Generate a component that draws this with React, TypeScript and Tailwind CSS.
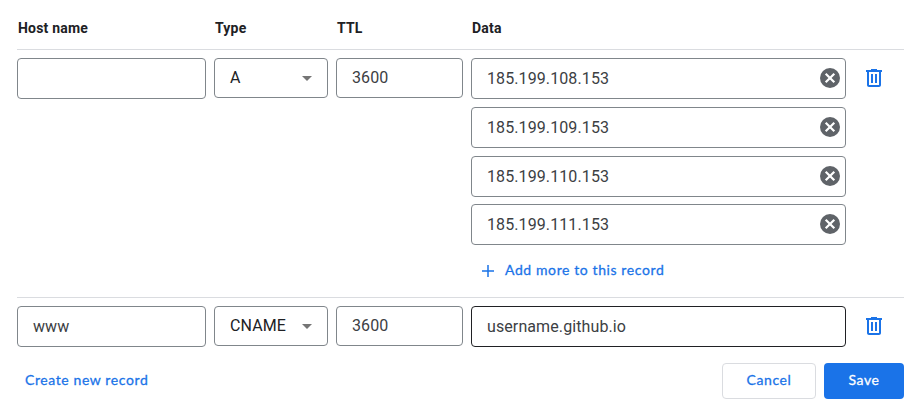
const fieldBorder = 'rounded border border-[#80868b]';
const actionText =
  "font-['Lato',sans-serif] text-[14px] leading-5 font-normal tracking-[0.6px] [-webkit-text-stroke:0.28px_currentColor]";

function TrashIcon() {
  return (
    <svg className="size-6 fill-[#1a73e8]" viewBox="0 0 24 24">
      <path d="M15 4V3H9v1H4v2h1v13c0 1.1.9 2 2 2h10c1.1 0 2-.9 2-2V6h1V4h-5zm2 15H7V6h10v13zM9 8h2v9H9zm4 0h2v9h-2z" />
    </svg>
  );
}

function ClearIcon() {
  return (
    <svg className="mb-px size-6" viewBox="0 0 24 24">
      <circle cx="12" cy="12" r="10" fill="#5f6368" />
      <path d="M7.7 7.7l8.6 8.6M16.3 7.7l-8.6 8.6" stroke="#fff" strokeWidth="2.2" />
    </svg>
  );
}

function HostField({ value }: { value: string }) {
  return (
    <div className={`flex h-[41px] w-[189px] items-center pl-[15px] ${fieldBorder}`}>{value}</div>
  );
}

function TypeField({ value }: { value: string }) {
  return (
    <div
      className={`ml-2 flex h-10 w-[114px] items-center justify-between pr-2 pl-[15px] text-[#202124] ${fieldBorder}`}
    >
      <span>{value}</span>
      <svg className="size-6 fill-[#757575]" viewBox="0 0 24 24">
        <path d="M7 10l5 5 5-5z" />
      </svg>
    </div>
  );
}

function TtlField() {
  return (
    <div className={`ml-2 flex h-10 w-[127px] items-center pl-[15px] ${fieldBorder}`}>3600</div>
  );
}

function DataField({ value }: { value: string }) {
  return (
    <div className={`flex h-[41px] w-[375px] items-center justify-between pr-[3px] pl-[15px] ${fieldBorder}`}>
      <span>{value}</span>
      <ClearIcon />
    </div>
  );
}

export default function App() {
  return (
    <main className="h-[411px] w-[917px] bg-white pr-[13px] pl-[17px] font-['Roboto',sans-serif] text-base leading-6 tracking-[0.1px] text-[#3c4043]">
      <header className="flex h-[50px] border-b border-[#dadce0] pt-[18px] text-sm leading-5 font-bold tracking-[0.2px] text-[#202124]">
        <span className="w-[198px] pl-px">Host name</span>
        <span className="w-[122px]">Type</span>
        <span className="w-[135px]">TTL</span>
        <span>Data</span>
      </header>

      <section className="flex h-[248px] items-start border-b border-[#dadce0] pt-2">
        <HostField value="" />
        <TypeField value="A" />
        <TtlField />
        <div className="ml-2 flex flex-col">
          <DataField value="185.199.108.153" />
          <div className="mt-2">
            <DataField value="185.199.109.153" />
          </div>
          <div className="mt-2">
            <DataField value="185.199.110.153" />
          </div>
          <div className="mt-[7px]">
            <DataField value="185.199.111.153" />
          </div>
          <button className={`mt-[15px] flex h-5 items-center pl-[11px] text-[#1a73e8] ${actionText}`}>
            <svg className="mt-0.5 size-3" viewBox="0 0 12 12" fill="none" stroke="#1a73e8" strokeWidth="1.5">
              <path d="M6 0v12M0 6h12" />
            </svg>
            <span className="ml-[11px]">Add more to this record</span>
          </button>
        </div>
        <div className="mt-2 ml-4">
          <TrashIcon />
        </div>
      </section>

      <section className="flex h-[49px] items-start pt-2">
        <HostField value="www" />
        <TypeField value="CNAME" />
        <TtlField />
        <div className="ml-2 flex h-[41px] w-[375px] items-center rounded border border-[#202124] pl-[15px]">
          username.github.io
        </div>
        <div className="mt-2 ml-4">
          <TrashIcon />
        </div>
      </section>

      <footer className={`mt-4 flex h-9 items-center text-[#1a73e8] ${actionText}`}>
        <button className="pb-0.5 pl-2">Create new record</button>
        <button className="ml-auto h-9 w-[94px] rounded border border-[#dadce0] pb-0.5">Cancel</button>
        <button className="ml-2 h-9 w-20 rounded bg-[#1a73e8] pb-0.5 text-white">Save</button>
      </footer>
    </main>
  );
}
